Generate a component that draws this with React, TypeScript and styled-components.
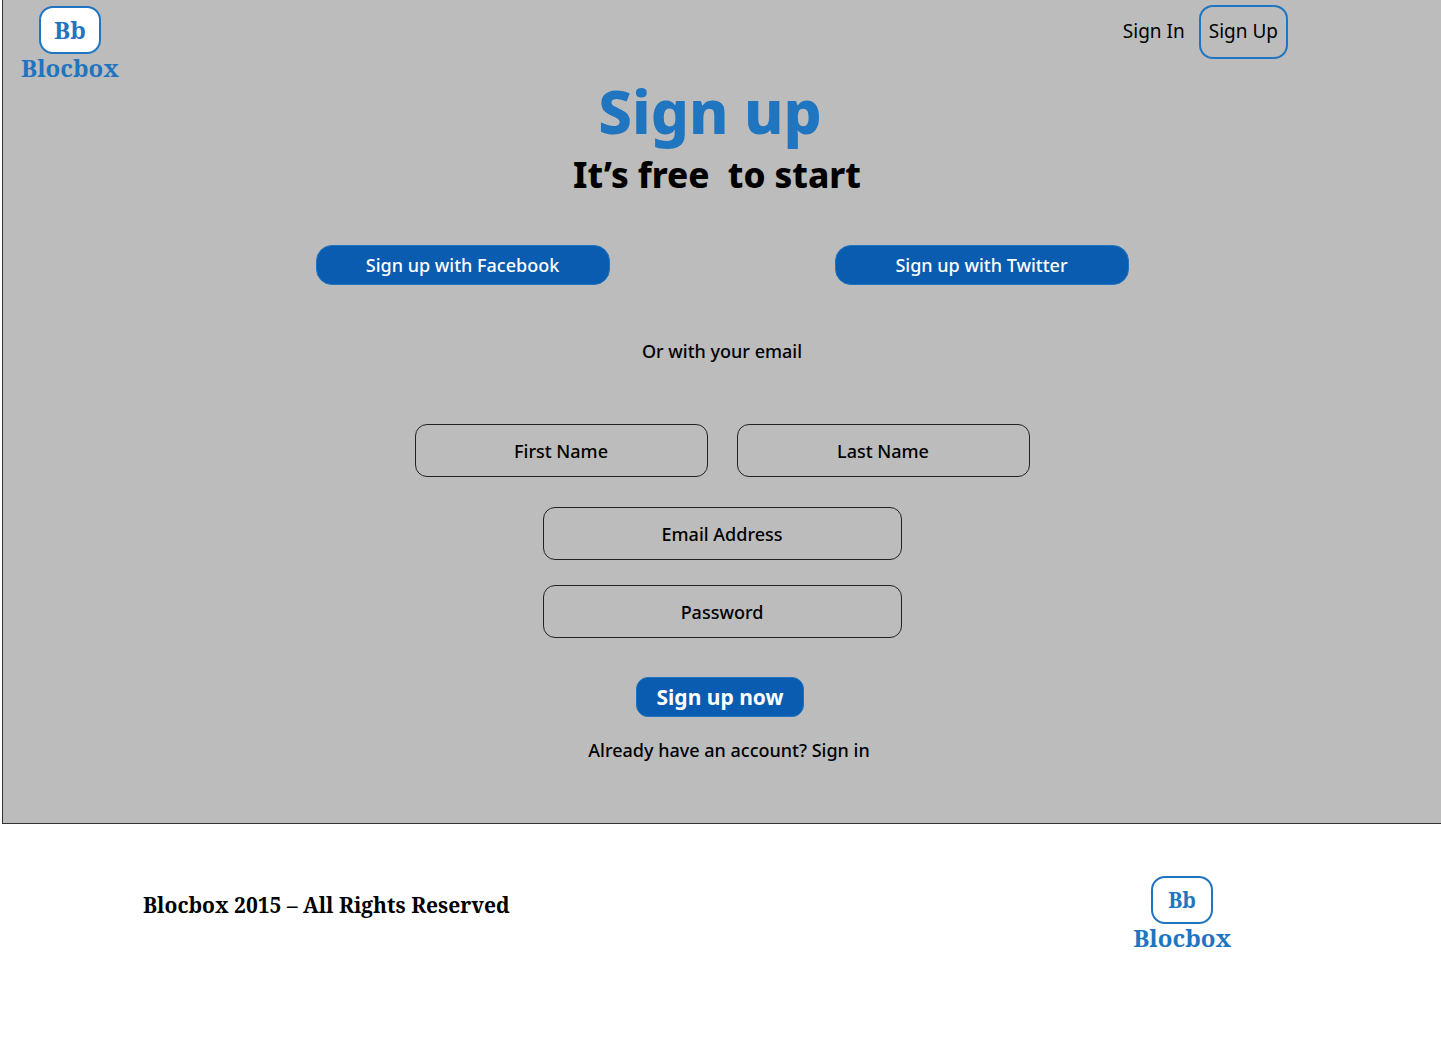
import React from 'react';
import styled, { createGlobalStyle } from 'styled-components';

const blue = '#1f75bf';
const sans = '"Noto Sans", "Open Sans", sans-serif';
const serif = '"Noto Serif", "DejaVu Serif", "Liberation Serif", serif';

const GlobalStyle = createGlobalStyle`
  *, *::before, *::after { box-sizing: border-box; }
  body { margin: 0; background: #fff; color: #000; font-family: ${sans}; }
  h1, h2, p { margin: 0; }
  a { color: inherit; text-decoration: none; }
`;

const Panel = styled.div`
  margin-left: 2px;
  background: #bcbcbc;
  border-left: 1px solid #333;
  border-bottom: 1px solid #333;
`;

const Header = styled.header`
  display: flex;
  justify-content: space-between;
  align-items: flex-start;
  padding: 5px 153px 0 18px;
`;

const LogoLink = styled.a`
  display: flex;
  flex-direction: column;
  align-items: center;
  padding-top: 1px;
  color: ${blue};
  font-family: ${serif};
  font-weight: 700;
  font-size: 24px;
  line-height: 28px;
`;

const LogoMark = styled.span<{ $small?: boolean }>`
  display: flex;
  justify-content: center;
  align-items: center;
  width: 62px;
  height: 48px;
  border: 2px solid ${blue};
  border-radius: 14px;
  background: #fff;
  font-size: ${(p) => (p.$small ? 21 : 24)}px;
`;

const Nav = styled.nav`
  display: flex;
  align-items: flex-start;
  gap: 14px;
  font-size: 19px;
  line-height: 48px;
`;

const NavLink = styled.a<{ $boxed?: boolean }>`
  height: 54px;
  border: 2px solid ${(p) => (p.$boxed ? blue : 'transparent')};
  border-width: ${(p) => (p.$boxed ? '2px' : '2px 0')};
  border-radius: 14px;
  padding: ${(p) => (p.$boxed ? '0 8px' : '0')};
`;

const Main = styled.main`
  display: flex;
  flex-direction: column;
  align-items: center;
  padding-bottom: 60px;
`;

const Title = styled.h1`
  padding-right: 24px;
  color: ${blue};
  font-size: 60px;
  line-height: 58px;
  font-weight: 800;
`;

const Subtitle = styled.h2`
  padding-right: 10px;
  margin-top: 10px;
  font-size: 35px;
  line-height: 50px;
  font-weight: 800;
  white-space: pre;
`;

const SocialRow = styled.div`
  display: flex;
  gap: 225px;
  margin-top: 45px;
`;

const Button = styled.button<{ $primary?: boolean }>`
  width: ${(p) => (p.$primary ? 168 : 294)}px;
  height: 40px;
  padding: 0;
  border: 1px solid ${blue};
  border-radius: ${(p) => (p.$primary ? 12 : 16)}px;
  background: #0a5cb0;
  color: #fff;
  font-family: ${sans};
  font-size: ${(p) => (p.$primary ? 21 : 18)}px;
  font-weight: ${(p) => (p.$primary ? 700 : 500)};
  cursor: pointer;
`;

const Divider = styled.p`
  margin-top: 54px;
  font-size: 18px;
  line-height: 24px;
  font-weight: 500;
`;

const Form = styled.form`
  display: flex;
  flex-direction: column;
  align-items: center;
  margin-top: 61px;
`;

const NameRow = styled.div`
  display: flex;
  gap: 29px;
  margin-bottom: 30px;
`;

const Field = styled.input<{ $wide?: boolean }>`
  width: ${(p) => (p.$wide ? 359 : 293)}px;
  height: 53px;
  margin-bottom: ${(p) => (p.$wide ? 25 : 0)}px;
  padding: 0 12px;
  border: 1px solid #222;
  border-radius: 12px;
  background: transparent;
  color: #000;
  font-family: ${sans};
  font-size: 18px;
  font-weight: 500;
  text-align: center;
  &::placeholder { color: #000; opacity: 1; }
`;

const Submit = styled.div`
  margin-top: 14px;
  padding-right: 4px;
`;

const Account = styled.p`
  margin-top: 20px;
  padding-left: 14px;
  font-size: 18px;
  line-height: 26px;
  font-weight: 500;
`;

const Footer = styled.footer`
  display: flex;
  justify-content: space-between;
  align-items: flex-start;
  padding: 51px 210px 0 143px;
`;

const Copyright = styled.p`
  padding-top: 15px;
  font-family: ${serif};
  font-size: 21px;
  line-height: 30px;
  font-weight: 700;
`;

function Logo({ small }: { small?: boolean }) {
  return (
    <LogoLink href="#">
      <LogoMark $small={small}>Bb</LogoMark>
      Blocbox
    </LogoLink>
  );
}

export default function App() {
  return (
    <>
      <GlobalStyle />
      <Panel>
        <Header>
          <Logo />
          <Nav>
            <NavLink href="#">Sign In</NavLink>
            <NavLink href="#" $boxed>Sign Up</NavLink>
          </Nav>
        </Header>
        <Main>
          <Title>Sign up</Title>
          <Subtitle>{'It’s free  to start'}</Subtitle>
          <SocialRow>
            <Button type="button">Sign up with Facebook</Button>
            <Button type="button">Sign up with Twitter</Button>
          </SocialRow>
          <Divider>Or with your email</Divider>
          <Form onSubmit={(e) => e.preventDefault()}>
            <NameRow>
              <Field type="text" placeholder="First Name" aria-label="First Name" />
              <Field type="text" placeholder="Last Name" aria-label="Last Name" />
            </NameRow>
            <Field $wide type="email" placeholder="Email Address" aria-label="Email Address" />
            <Field $wide type="password" placeholder="Password" aria-label="Password" />
            <Submit>
              <Button type="submit" $primary>Sign up now</Button>
            </Submit>
          </Form>
          <Account>
            Already have an account? <a href="#">Sign in</a>
          </Account>
        </Main>
      </Panel>
      <Footer>
        <Copyright>Blocbox 2015 – All Rights Reserved</Copyright>
        <Logo small />
      </Footer>
    </>
  );
}
